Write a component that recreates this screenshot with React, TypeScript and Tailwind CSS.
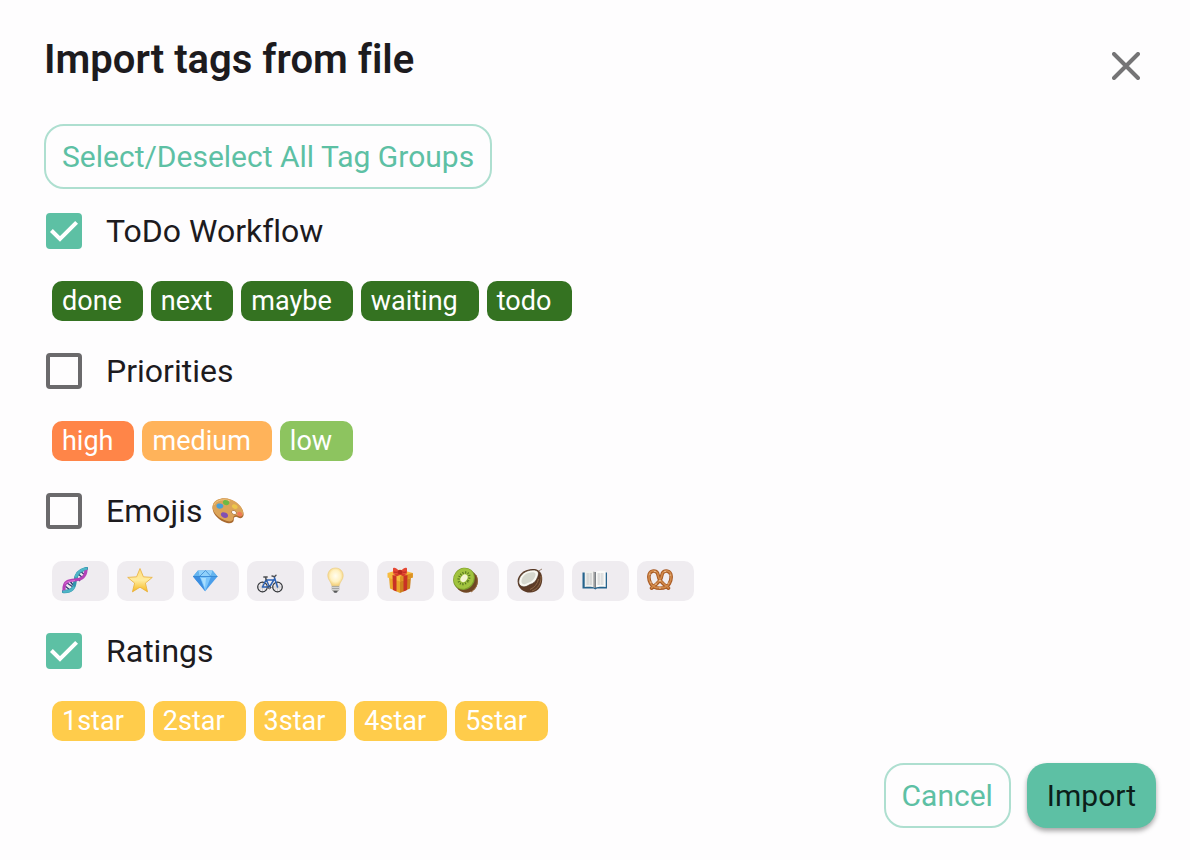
import { useState } from "react";
import type { ReactNode } from "react";

type Tag = {
  title: string;
  color: string;
  icon?: ReactNode;
};

type TagGroup = {
  id: string;
  title: string;
  icon?: ReactNode;
  selected: boolean;
  tags: Tag[];
};

function Emoji({ label, children }: { label: string; children: ReactNode }) {
  return (
    <svg role="img" aria-label={label} viewBox="0 0 26 28" className="w-[26px] h-7">
      {children}
    </svg>
  );
}

const palette = (
  <svg role="img" aria-label="palette" viewBox="0 0 32 26" className="w-8 h-[26px]">
    <path
      d="M1 7C3 1 12-1 19 2c8 3 13 10 12.600 15-.4 3-3 4-5.600 2.500-2-1.500-4.500-.5-4.200 2 .2 3-2.800 4.500-6.800 3.500C6 22.500-1.500 14 1 7Z"
      fill="#a9692f"
    />
    <path
      d="M1 6.500C3 .5 12-1.300 19 1.500c8 3 12.600 9.500 12.200 14-.4 3-3 3.500-5.400 2.200-2.300-1.200-4.800 0-4.500 2.300.2 3-2.800 4-6.300 3C6 20.500-1.200 13 1 6.500Z"
      fill="#dca458"
    />
    <path d="M2 7C4 2 12 .5 18 3" stroke="#efc583" strokeWidth="1" fill="none" />
    <ellipse cx="22" cy="14.500" rx="2.600" ry="1.900" fill="#fff" stroke="#a87037" strokeWidth=".7" transform="rotate(25 22 14.500)" />
    <path d="M4.500 7c1-2 2.500-1.500 4-1.500 2 .2 3.500 2 2.600 3.500-.8 1.700-3 2-4.600 1.500C5 10 4 8.500 4.500 7Z" fill="#4a9fd6" />
    <path d="M11 3.500c1-2 3-1.700 4.600-1 1.700.6 2.400 2.500 1.200 3.800-1.300 1.200-3 1-4.300.4C11.200 6 10.500 4.800 11 3.500Z" fill="#6dba45" />
    <path d="M20 7.500c1-1.700 3-1.500 4.300-.4 1.500 1 1.800 2.700.7 3.500-1.200.8-3 .5-4-.5-.8-.8-1.400-1.700-1-2.600Z" fill="#edc54b" />
    <path d="M25.500 14.500c1-1.200 3-1 4 .2 1 1.200 1 2.800 0 3.400-1.300.6-3 .2-3.700-.9-.5-.8-.8-1.800-.3-2.700Z" fill="#ef7b56" />
    <path d="M9 15.500c1-1.700 3-1.500 4.800-.7 2 .8 3 3 1.700 4.400-1.400 1.300-3.600.9-5-.2-1.200-.9-2-2.200-1.500-3.500Z" fill="#8250b4" />
  </svg>
);

const dna = (
  <Emoji label="dna">
    <path d="m3 19 5 4M5 16l6 4M8 14l3 4M14 10l4 4M15 6l6 5M18 4l5 4" stroke="#343d74" strokeWidth="1.400" />
    <path d="M1.500 24.500c8 .5 11-3 11.500-10C13.500 8 17 3 24.500 1.500" stroke="#3195ad" strokeWidth="3.400" fill="none" strokeLinecap="round" />
    <path d="M2 23C1.500 14 7 13.500 13 13c7-.5 10.500-3 11-10" stroke="#b542b8" strokeWidth="3.200" fill="none" strokeLinecap="round" />
    <path d="M2 24.500c5 .3 8-1 9.500-4M14 9.500c1.500-4 5-7 10-7.700" stroke="#4fb6c7" strokeWidth="2.400" fill="none" strokeLinecap="round" />
    <path d="M2.500 17C5 14 9 14 13 13.500" stroke="#dc70d8" strokeWidth="1" fill="none" />
  </Emoji>
);

const star = (
  <Emoji label="star">
    <defs>
      <linearGradient id="star-fill" x1="0" y1="0" x2="0" y2="1">
        <stop offset="0" stopColor="#ffdc7c" />
        <stop offset=".5" stopColor="#ffec9f" />
        <stop offset="1" stopColor="#f6b71c" />
      </linearGradient>
    </defs>
    <path
      d="m13 1.500 3.400 8.300 8.900.6-6.900 5.700 2.200 8.800-7.600-4.700-7.600 4.700 2.200-8.800L.7 10.400l8.900-.6Z"
      fill="url(#star-fill)"
      stroke="#e9b03c"
      strokeWidth=".8"
      strokeLinejoin="round"
    />
  </Emoji>
);

const gem = (
  <Emoji label="gem">
    <path d="M6 3.500h14.500l5 6L13.200 24.300 1 9.500Z" fill="#4a9eea" />
    <path d="M6 3.500h14.500L19 9H7.500Z" fill="#8fd0fa" />
    <path d="M6 3.500 1 9.500h6.500ZM20.500 3.500l5 6H19Z" fill="#64b4ee" />
    <path d="M7.500 9.500H19l-5.800 14.800Z" fill="#79c4fb" />
    <path d="m1 9.500 12.200 14.800L7.500 9.500Z" fill="#3b8de0" />
    <path d="M1 9.500h24.500M7.500 9.500l6-6 5.500 6" stroke="#2f7fcb" strokeWidth=".7" fill="none" />
    <path d="m9 11 4 10 1-10Z" fill="#a8defe" />
  </Emoji>
);

const bicycle = (
  <Emoji label="bicycle">
    <g fill="none" strokeLinecap="round" strokeLinejoin="round">
      <g stroke="#aaa" strokeWidth=".5">
        <path d="M5.500 15v10M.5 20h10M2 16.500l7 7M2 23.500l7-7M20.500 15v10M15.500 20h10M17 16.500l7 7M17 23.500l7-7" />
      </g>
      <circle cx="5.500" cy="20" r="4.800" stroke="#35373b" strokeWidth="1.200" />
      <circle cx="20.500" cy="20" r="4.800" stroke="#35373b" strokeWidth="1.200" />
      <path d="m5.500 20 3.700-7.500L12.500 20l5.200-8.500M5.500 20h7M9.200 13h8.300M17.300 10l3.200 10" stroke="#2d62b4" strokeWidth="1.500" />
      <path d="M9.200 13 8.500 10M6.800 10h3.400M15 9l2.500.7 1.500-1.500" stroke="#4d4f52" strokeWidth="1.400" />
      <circle cx="12.500" cy="20.500" r="1.300" stroke="#46484b" strokeWidth="1" />
    </g>
  </Emoji>
);

const bulb = (
  <Emoji label="light bulb">
    <defs>
      <radialGradient id="bulb-glow" cx=".5" cy=".45" r=".55">
        <stop offset="0" stopColor="#fffdf0" />
        <stop offset=".6" stopColor="#fff1c1" />
        <stop offset="1" stopColor="#f4ce75" />
      </radialGradient>
    </defs>
    <path d="M9.700 18.500h7.600v4.300l-2.200 2.700h-3.200l-2.200-2.700Z" fill="#a6a6a3" />
    <path
      d="M13.500 1C8.700 1 5.800 4.500 5.800 8.700c0 4 3.200 5.800 4 10h7.400c.8-4.200 4-6 4-10 0-4.200-2.900-7.700-7.700-7.700Z"
      fill="url(#bulb-glow)"
      stroke="#eacb81"
      strokeWidth=".6"
    />
    <path d="M9.800 20.500h7.400M10 22.500h7" stroke="#dedede" strokeWidth=".8" />
    <path d="M11.500 24h4l-1 1.800h-2Z" fill="#58595b" />
  </Emoji>
);

const gift = (
  <Emoji label="gift">
    <path d="m2 10 11 3v13L3 21.500Z" fill="#eaa62b" />
    <path d="m13 13 11-3-1 11.500L13 26Z" fill="#cd811d" />
    <path d="M.5 6 13 2.500 25.800 6v4.500L13 14.500.5 10.500Z" fill="#f7bc40" />
    <path d="m13 9.500 12.800-3.500v4.500L13 14.500Z" fill="#dc9223" />
    <path d="m5.500 8 4 1.300V24.500L6 23ZM16.500 9.300l4-1.300-.5 15-3.500 1.500Z" fill="#c93225" />
    <path d="m6 5 4-1 10 4-3.700 1.300ZM16 4l4 1-10 4.300L6 8Z" fill="#d63b2b" />
    <path d="M12.500 5C10 0 6 0 6 1.500v5c2 1 4.500.5 6.500-1.500ZM13.500 5C16 0 20 0 20 1.500v5c-2 1-4.500.5-6.500-1.500Z" fill="#e54734" />
    <path d="M7 5c2 .5 3.500.3 5-.4M14 4.600c2 .7 3.500.9 5 .4" stroke="#a72018" strokeWidth=".8" fill="none" />
    <rect x="11" y="3" width="4" height="4" rx="1" fill="#b9271e" />
  </Emoji>
);

const kiwi = (
  <Emoji label="kiwi">
    <ellipse cx="14.200" cy="14.200" rx="11.500" ry="11.500" fill="#704724" />
    <path d="M24 8c3 6 1 14-5 17" stroke="#95663a" strokeWidth="1" fill="none" />
    <ellipse cx="12" cy="11.800" rx="10.500" ry="11.500" fill="#7c9d2c" transform="rotate(38 12 11.800)" />
    <ellipse cx="11.800" cy="11.500" rx="9.600" ry="10.700" fill="#a1c33e" transform="rotate(38 11.800 11.500)" />
    <ellipse cx="12" cy="11.300" rx="4.700" ry="6.300" fill="none" stroke="#54731e" strokeWidth="2.400" strokeDasharray="1 1.500" transform="rotate(38 12 11.300)" />
    <ellipse cx="12" cy="11.300" rx="3" ry="4.200" fill="#f4f4d2" transform="rotate(38 12 11.300)" />
  </Emoji>
);

const coconut = (
  <Emoji label="coconut">
    <path d="M.8 12C3 5 10 1.500 17 2c6 .5 8.500 5 8.200 11-.4 7.500-5 12.500-12 12.500C5.500 25.500-.5 20 .8 12Z" fill="#5c3b26" />
    <path d="M24 9c.5 7-3 13-9 15M21.500 12c-1 5-4 8.500-8.500 10.500" stroke="#8d6847" strokeWidth="1" fill="none" />
    <path d="M1.800 14C2.500 7.500 9 3 16 3c5 0 6.500 2.500 4.800 6.500-1 2.300-1.500 4-3.800 6-2 1.600-3.500 1.500-5.500 2.800-1.700 1-3 1.700-5 1.400C3 19.400 1.400 17 1.800 14Z" fill="#f8f8f1" stroke="#402a1c" strokeWidth=".6" />
    <path d="M4.500 13.500C5.500 8.500 10 5.500 15 5.300c3.500-.1 4.300 1.700 3 4.400-1 2-1.700 3.300-3.500 4.600-1.600 1.200-3.200 1.200-4.800 2.300-1.200.7-2.200 1-3.200.7-1.500-.4-2.400-1.800-2-3.800Z" fill="#d6d8ce" />
    <path d="m21.500 4 3.500-2" stroke="#82664d" strokeWidth=".8" />
  </Emoji>
);

const book = (
  <Emoji label="open book">
    <path d="M.5 5.500h24.500v16H15l-1.700 1-1.700-1H.5Z" fill="#26648d" />
    <path d="M2.700 4c4-.5 8-.5 10.500 1.200v15.600c-3-1.300-7-1.300-10.500-.8Z" fill="#f0f0ed" />
    <path d="M23.700 4c-4-.5-8-.5-10.500 1.200v15.600c3-1.300 7-1.300 10.500-.8Z" fill="#fafaf8" />
    <path d="M11 4.500c1 .1 2 .5 2.200 1v15.300c-.6-.4-1.300-.6-2.200-.8Z" fill="#bbb" />
    <path d="M13.200 5v16" stroke="#555a5f" strokeWidth="1" />
    <path
      d="M4.500 7h5.700M4.500 9h5.700M4.500 11h5.700M4.500 13h5.700M4.500 15h5.700M4.500 17h5.700M15.500 7h6.500M15.500 9h6.500M15.500 11h6.500M15.500 13h6.500M15.500 15h6.500M15.500 17h6.500"
      stroke="#b1b4b6"
      strokeWidth=".8"
      strokeDasharray="2.400 .6"
    />
  </Emoji>
);

const pretzel = (
  <Emoji label="pretzel">
    <g fill="none" strokeLinecap="round" strokeLinejoin="round">
      <path
        d="M4.500 21.200C8 18.500 14.500 14 14.800 8.500 15.200 4.500 18 3.700 20.500 4.200c4.500 1 4.500 8 1.700 12.500-2.200 4.300-5.700 4.500-9.200 4.500s-7-.2-9.200-4.500C1 12.200 1 5.200 5.500 4.200 8 3.700 10.800 4.500 11.200 8.500 11.500 14 18 18.500 21.500 21.200"
        stroke="#a85b25"
        strokeWidth="3.600"
      />
      <path
        d="M4.500 20.800C8 18 14.500 13.500 14.800 8.500 15.200 4.500 18 3.500 20.500 4c4.500 1 4.500 8 1.700 12.500-2.200 4.300-5.700 4.300-9.200 4.300s-7 0-9.200-4.300C1 12 1 5 5.500 4 8 3.500 10.800 4.500 11.200 8.500 11.500 13.500 18 18 21.500 20.800"
        stroke="#d28a4b"
        strokeWidth="1.600"
      />
      <path d="M3 7v.1M4 15v.1M8 4.500v.1M9 17v.1M13 13.500v.1M18 4.500v.1M23 8v.1M21 16v.1M13 21v.1" stroke="#fff1dc" strokeWidth="1.200" />
    </g>
  </Emoji>
);

const emojiTag = (title: string, icon: ReactNode): Tag => ({
  title,
  icon,
  color: "bg-[#efecf0] text-black",
});

const tagGroups: TagGroup[] = [
  {
    id: "todo-workflow",
    title: "ToDo Workflow",
    selected: true,
    tags: ["done", "next", "maybe", "waiting", "todo"].map((title) => ({
      title,
      color: "bg-[#347221] text-white",
    })),
  },
  {
    id: "priorities",
    title: "Priorities",
    selected: false,
    tags: [
      { title: "high", color: "bg-[#ff8548] text-white" },
      { title: "medium", color: "bg-[#ffb35a] text-white" },
      { title: "low", color: "bg-[#8dc45f] text-white" },
    ],
  },
  {
    id: "emojis",
    title: "Emojis",
    icon: palette,
    selected: false,
    tags: [
      emojiTag("dna", dna),
      emojiTag("star", star),
      emojiTag("gem", gem),
      emojiTag("bicycle", bicycle),
      emojiTag("bulb", bulb),
      emojiTag("gift", gift),
      emojiTag("kiwi", kiwi),
      emojiTag("coconut", coconut),
      emojiTag("book", book),
      emojiTag("pretzel", pretzel),
    ],
  },
  {
    id: "ratings",
    title: "Ratings",
    selected: true,
    tags: ["1star", "2star", "3star", "4star", "5star"].map((title) => ({
      title,
      color: "bg-[#ffcc4b] text-white",
    })),
  },
];

export default function App() {
  const [selected, setSelected] = useState<string[]>(
    tagGroups.filter((g) => g.selected).map((g) => g.id)
  );

  const toggle = (id: string) =>
    setSelected((prev) =>
      prev.includes(id) ? prev.filter((s) => s !== id) : [...prev, id]
    );

  const toggleAll = () =>
    setSelected((prev) =>
      prev.length === tagGroups.length ? [] : tagGroups.map((g) => g.id)
    );

  return (
    <div className="min-h-screen bg-[#fefdfe] font-['Roboto',sans-serif] text-[#1d1b1e] [font-variant-ligatures:none]">
      {/* Title */}
      <div className="flex items-start justify-between pl-11 pr-[34px] pt-8">
        <h1 className="text-[40px] leading-14 font-semibold">Import tags from file</h1>
        <button type="button" aria-label="Close" className="p-4 mt-1 cursor-pointer">
          <svg viewBox="0 0 28 28" className="w-7 h-7" stroke="#757476" strokeWidth="4" strokeLinecap="round">
            <path d="m2 2 24 24M26 2 2 26" />
          </svg>
        </button>
      </div>

      {/* Tag groups */}
      <div className="px-11 pt-7">
        <button
          type="button"
          onClick={toggleAll}
          className="h-[65px] px-4 border-2 border-[#aedfd0] rounded-[20px] text-[30px] font-[450] text-[#5dc0a4] cursor-pointer"
        >
          Select/Deselect All Tag Groups
        </button>

        {tagGroups.map((group) => (
          <div key={group.id}>
            <div className="flex items-center gap-6 h-[84px] pl-0.5">
              <span className="grid w-9 h-9">
                <input
                  id={group.id}
                  type="checkbox"
                  checked={selected.includes(group.id)}
                  onChange={() => toggle(group.id)}
                  className="peer col-start-1 row-start-1 appearance-none w-9 h-9 border-4 border-[#6b6a6c] rounded-sm checked:border-[#5dc0a4] checked:bg-[#5dc0a4] cursor-pointer"
                />
                <svg
                  viewBox="0 0 36 36"
                  className="col-start-1 row-start-1 w-9 h-9 hidden peer-checked:block pointer-events-none"
                  fill="none"
                  stroke="#fff"
                  strokeWidth="4"
                >
                  <path d="m5.400 17.500 8.600 8.500L30.600 9.400" />
                </svg>
              </span>
              <label htmlFor={group.id} className="flex items-center gap-2.5 text-[32px] cursor-pointer">
                {group.title}
                {group.icon}
              </label>
            </div>

            <div className="flex flex-wrap gap-2 p-2">
              {group.tags.map((tag) => (
                <span
                  key={tag.title}
                  className={`flex items-center h-10 pl-2.5 pr-[21px] rounded-[10px] text-[27px] font-[450] ${tag.color}`}
                >
                  {tag.icon ?? tag.title}
                </span>
              ))}
            </div>
          </div>
        ))}
      </div>

      {/* Actions */}
      <div className="flex justify-end gap-4 pl-11 pr-[34px] pt-[14px] pb-8">
        <button
          type="button"
          className="h-[65px] px-4 border-2 border-[#aedfd0] rounded-[20px] text-[30px] font-[450] text-[#5dc0a4] cursor-pointer"
        >
          Cancel
        </button>
        <button
          type="button"
          className="h-[65px] px-5 rounded-[20px] bg-[#5dc0a4] text-[30px] font-[450] text-[#0c1f1a] shadow-[0_3px_5px_rgba(0,0,0,0.35)] cursor-pointer"
        >
          Import
        </button>
      </div>
    </div>
  );
}
